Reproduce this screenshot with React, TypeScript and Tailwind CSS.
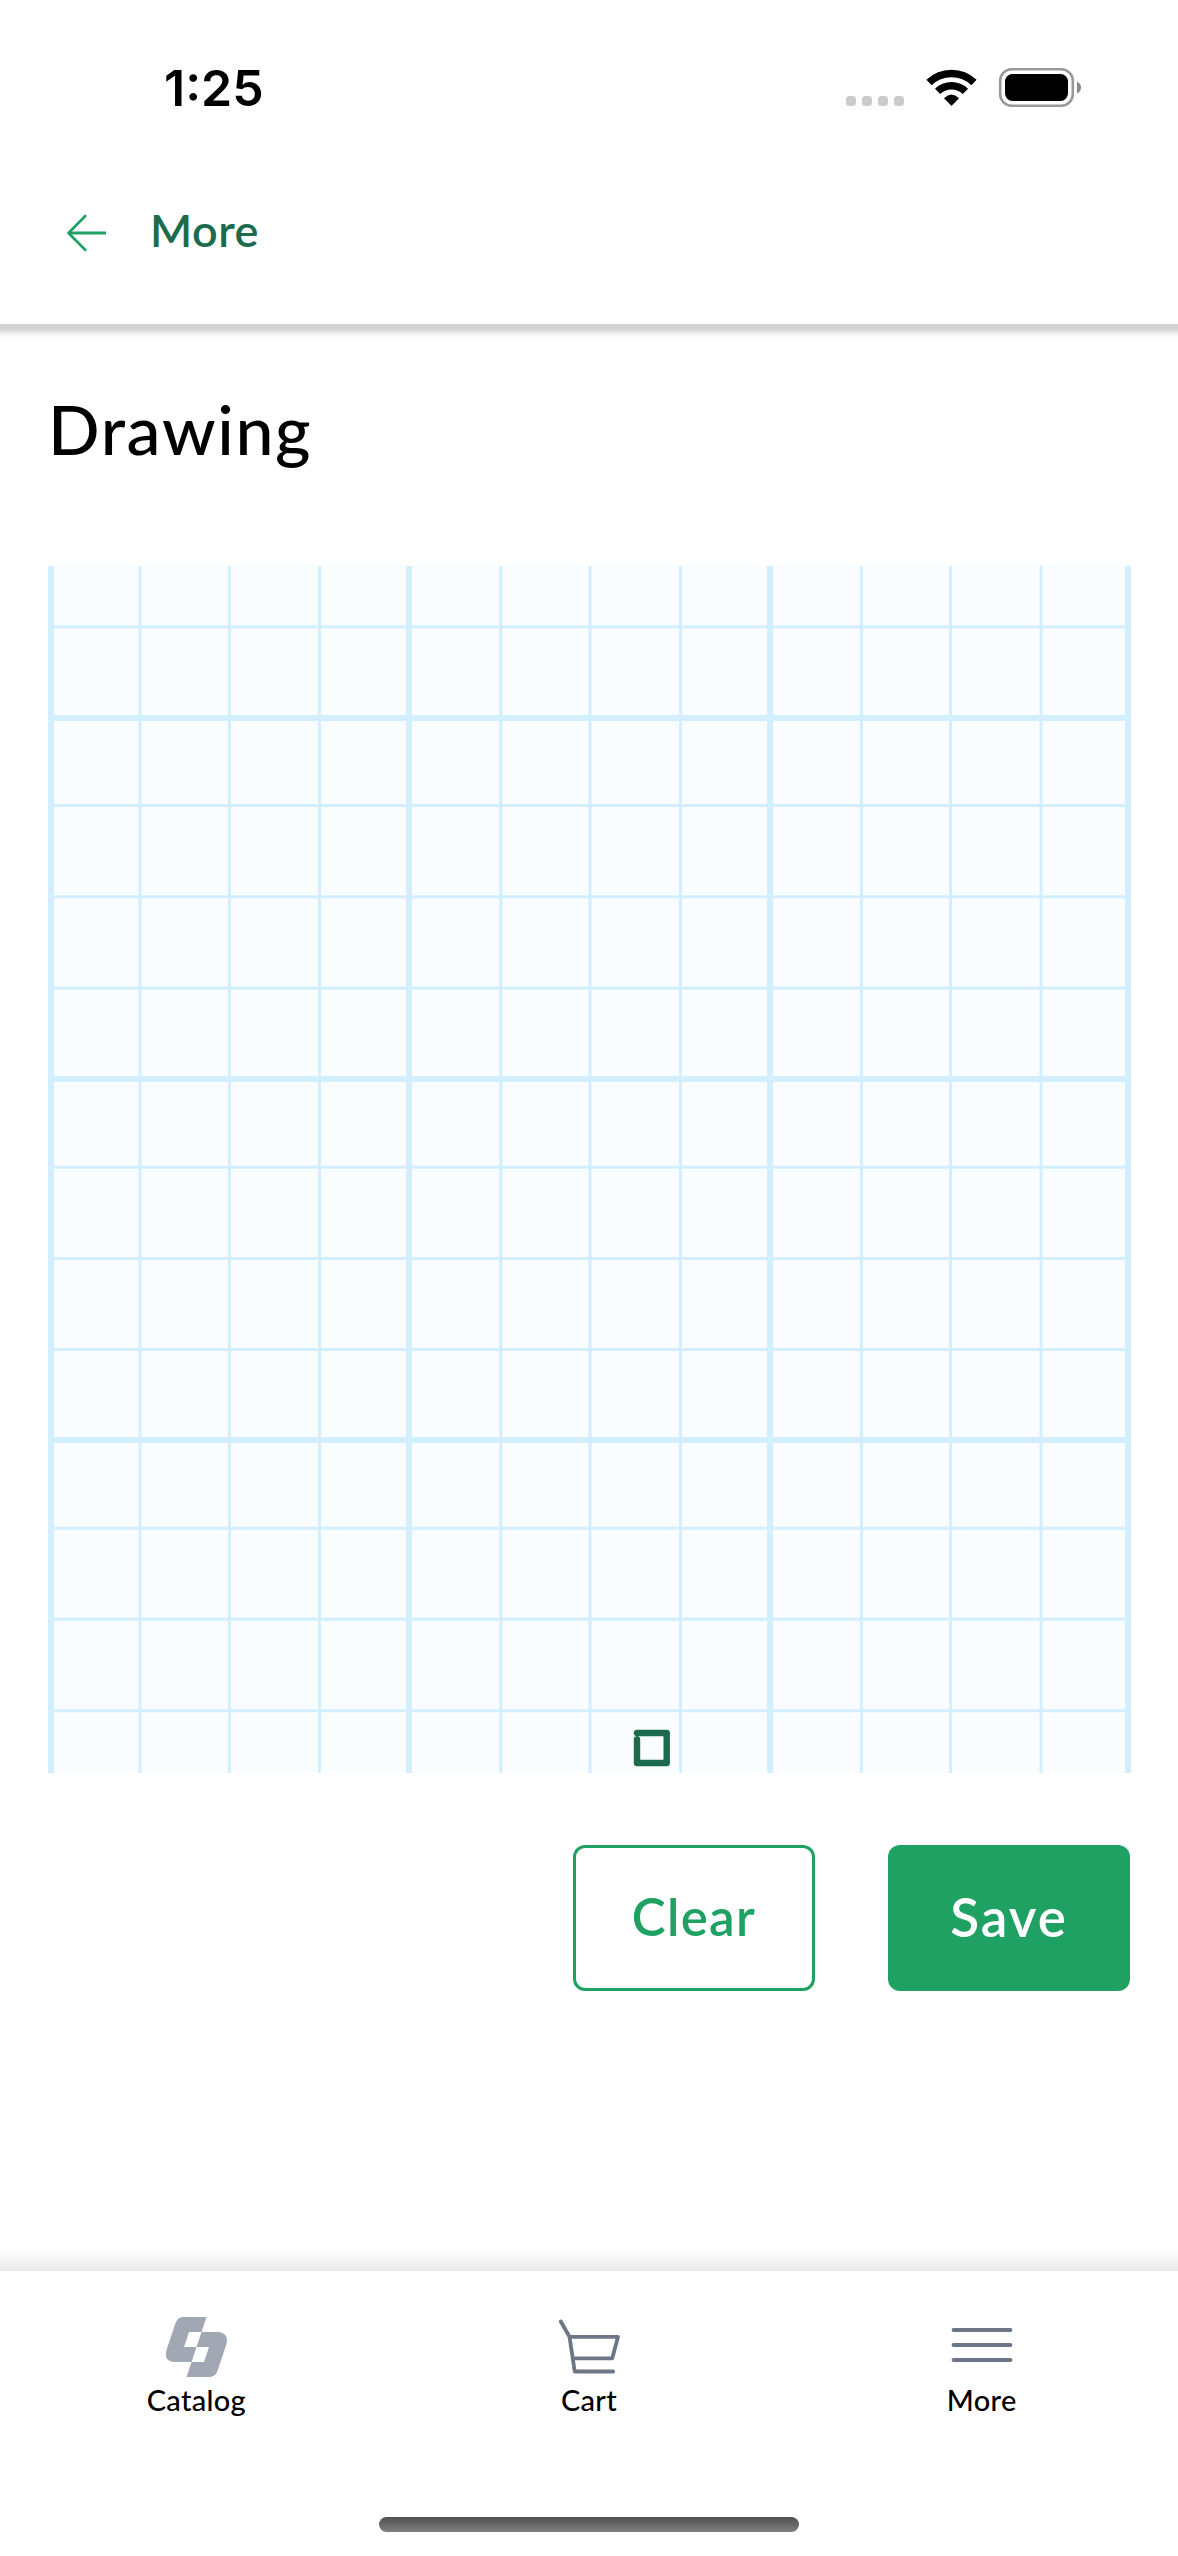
import React from "react";

const THICK_X = [51, 409, 770, 1128];
const THIN_X = [140, 229.5, 319.5, 500.8, 590, 680.5, 861.5, 950.5, 1041];
const THICK_Y = [718, 1079, 1440];
const THIN_Y = [626.8, 805.6, 896.8, 988.2, 1167.2, 1258.4, 1349.5, 1528.2, 1619.3, 1710.8];

function StatusBar() {
  return (
    <div className="flex h-[177px] items-start justify-between pl-[164px] pr-[96px] pt-[60px]">
      <span className="font-['Inter'] text-[50px] font-semibold leading-[56px]">1:25</span>
      <svg className="mt-[8px]" width="236" height="40" viewBox="846 68 236 40">
        {[846, 862, 878, 894].map((x) => (
          <rect key={x} x={x} y="96" width="10" height="10" rx="3.5" fill="#cbcbcb" />
        ))}
        <g fill="none" stroke="#000" strokeWidth="7.5">
          <path d="M929 82.5A32.5 32.5 0 0 1 974 82.5" />
          <path d="M937.6 91.4A20 20 0 0 1 965.4 91.4" />
        </g>
        <path d="M951.5 106L944 98.2Q951.5 91 959 98.2Z" fill="#000" />
        <rect x="1000.2" y="69.2" width="72.6" height="36.6" rx="11.5" fill="none" stroke="#999" strokeWidth="2.6" />
        <rect x="1005" y="74" width="63" height="27" rx="7.5" fill="#000" />
        <path d="M1077 81.5Q1081 83.500 1081 87.500T1077 93.500Z" fill="#888" />
      </svg>
    </div>
  );
}

function Header() {
  return (
    <header className="flex h-[147px] items-start pl-[66px] pt-[27px]">
      <svg className="mt-[10px]" width="41" height="38" viewBox="66 214 41 38" fill="none" stroke="#1fa163">
        <path d="M68.500 233H106" strokeWidth="3.2" />
        <path d="M85.300 216L68.500 233L85.300 250" strokeWidth="2.6" strokeLinecap="round" strokeLinejoin="round" />
      </svg>
      <span className="ml-[43px] text-[45px] font-semibold leading-[52px] tracking-[0.5px] text-[#1b6b4c]">More</span>
    </header>
  );
}

function DrawingCanvas() {
  return (
    <svg className="block" width="1083" height="1207" viewBox="48 566 1083 1207">
      <rect x="48" y="566" width="1083" height="1207" fill="#f9fdff" />
      <g stroke="#d3efff">
        {THIN_Y.map((y) => <path key={y} d={`M48 ${y}H1131`} strokeWidth="3" />)}
        {THIN_X.map((x) => <path key={x} d={`M${x} 566V1773`} strokeWidth="3" />)}
        {THICK_Y.map((y) => <path key={y} d={`M48 ${y}H1131`} strokeWidth="6" />)}
        {THICK_X.map((x) => <path key={x} d={`M${x} 566V1773`} strokeWidth="6" />)}
      </g>
      <path
        d="M637 1733H666.700V1763H637V1739.500"
        fill="none"
        stroke="#1b6b4c"
        strokeWidth="6.4"
        strokeLinecap="round"
        strokeLinejoin="round"
      />
    </svg>
  );
}

function CatalogIcon() {
  return (
    <svg width="62" height="62" viewBox="165 2316 62 62" fill="#a1a8b3">
      <path d="M183 2317H206.500L201.500 2332H189L184 2347H196.500L191.500 2362H174Q163.500 2361 166.500 2350L175.500 2323Q178 2317 183 2317Z" />
      <path d="M201.500 2332H219Q229 2333.500 226.500 2344L217.500 2371Q215 2377 209 2377H186.500L191.500 2362H204L209 2347H196.500Z" />
    </svg>
  );
}

function CartIcon() {
  return (
    <svg width="62" height="62" viewBox="558 2316 62 62" fill="none" stroke="#6d7686" strokeWidth="3.8" strokeLinecap="round" strokeLinejoin="round">
      <path d="M560.800 2321.500L569.500 2336.800H618L612.300 2358.300H573.500M569.500 2336.800L574.700 2371.500H613.200" />
    </svg>
  );
}

function MenuIcon() {
  return (
    <svg width="62" height="62" viewBox="951.500 2316 62 62" stroke="#6d7686" strokeWidth="3.8" strokeLinecap="round">
      <path d="M954 2330H1011M954 2345H1011M954 2360H1011" />
    </svg>
  );
}

function Tab({ label, children }: { label: string; children: React.ReactNode }) {
  return (
    <div className="flex flex-1 flex-col items-center pt-[45px]">
      {children}
      <span className="mt-[4px] text-[29px] font-medium leading-[36px] tracking-[0.3px]">{label}</span>
    </div>
  );
}

export default function App() {
  return (
    <div className="flex h-[2556px] w-[1178px] flex-col overflow-hidden bg-white font-['Lato',sans-serif] text-black">
      <StatusBar />
      <Header />
      <div className="h-[16px] bg-[linear-gradient(to_bottom,#d2d2d2_0px,#d2d2d2_5px,#ececec_9px,#fafafa_13px,#ffffff_16px)]" />
      <main className="flex flex-1 flex-col px-[48px] pt-[47px]">
        <h1 className="h-[179px] text-[68px] font-medium leading-[84px] tracking-[1.6px]">Drawing</h1>
        <DrawingCanvas />
        <div className="mt-[72px] flex justify-end gap-[73px]">
          <button className="h-[146px] w-[242px] rounded-[12px] border-[3px] border-[#1fa163] pb-[2px] text-[51px] font-semibold tracking-[1.3px] text-[#1fa163]">Clear</button>
          <button className="h-[146px] w-[242px] rounded-[12px] bg-[#1fa163] pb-[2px] text-[53px] font-semibold tracking-[2px] text-white">Save</button>
        </div>
      </main>
      <div className="h-[21px] bg-gradient-to-b from-white to-[#e8e8e8]" />
      <nav className="flex h-[246px]">
        <Tab label="Catalog"><CatalogIcon /></Tab>
        <Tab label="Cart"><CartIcon /></Tab>
        <Tab label="More"><MenuIcon /></Tab>
      </nav>
      <div className="flex h-[39px] justify-center">
        <div className="h-[15px] w-[420px] rounded-full bg-gradient-to-b from-[#505050] to-[#808080]" />
      </div>
    </div>
  );
}
